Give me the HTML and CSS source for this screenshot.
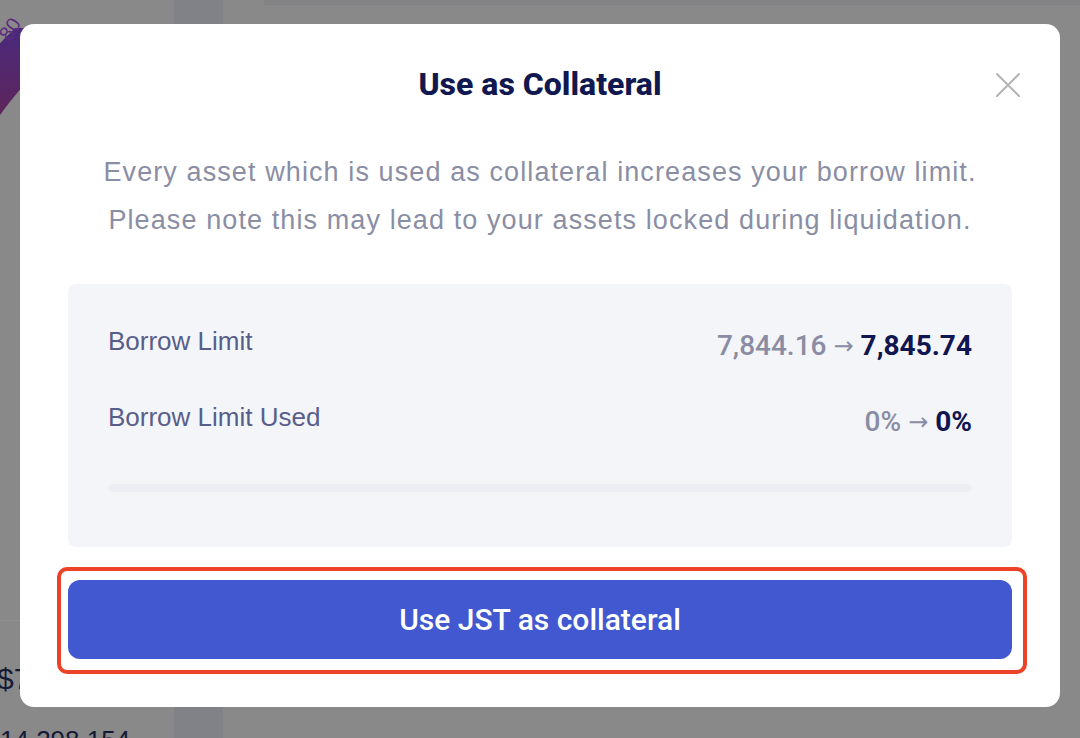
FILE: index.html
```html
<!DOCTYPE html>
<html lang="en">
<head>
<meta charset="utf-8">
<title>Use as Collateral</title>
<link rel="stylesheet" href="styles.css">
</head>
<body>
<div class="app">
  <aside class="side">
    <svg class="gauge" width="174" height="280" viewBox="0 0 174 280">
      <defs>
        <linearGradient id="g" gradientUnits="userSpaceOnUse" x1="0" y1="0" x2="0" y2="270">
          <stop offset="0" stop-color="#4a2a7c" stop-opacity="0"/>
          <stop offset="0.105" stop-color="#4a2a7c" stop-opacity="0"/>
          <stop offset="0.105" stop-color="#4a2a7c"/>
          <stop offset="0.45" stop-color="#5f2458"/>
          <stop offset="1" stop-color="#898989" stop-opacity="0"/>
        </linearGradient>
      </defs>
      <circle cx="300" cy="330" r="392" fill="none" stroke="url(#g)" stroke-width="46"/>
      <text x="9" y="42" class="gauge-label" transform="rotate(-55 9 42)">80</text>
    </svg>
    <div class="side-divider"></div>
    <div class="side-amount">$7</div>
    <div class="side-number">14,298,154</div>
  </aside>
  <div class="strip"></div>
  <main class="main">
    <div class="topbar"></div>
  </main>
</div>

<div class="overlay">
  <div class="modal">
    <h1 class="title">Use as Collateral</h1>
    <button class="close" aria-label="Close">
      <svg width="24" height="24" viewBox="0 0 24 24"><path d="M1 1 L23 23 M23 1 L1 23" stroke="#b4b4b4" stroke-width="2" stroke-linecap="round"/></svg>
    </button>
    <p class="desc">Every asset which is used as collateral increases your borrow limit.<br>Please note this may lead to your assets locked during liquidation.</p>
    <div class="stats">
      <div class="row">
        <span class="label">Borrow Limit</span>
        <span class="value"><span class="old">7,844.16</span><span class="arrow">→</span><span class="new">7,845.74</span></span>
      </div>
      <div class="row row2">
        <span class="label">Borrow Limit Used</span>
        <span class="value"><span class="old">0%</span><span class="arrow">→</span><span class="new">0%</span></span>
      </div>
      <div class="bar"></div>
    </div>
    <div class="action">
      <button class="primary">Use JST as collateral</button>
      <div class="highlight"></div>
    </div>
  </div>
</div>
</body>
</html>
```
FILE: styles.css
```css
* { box-sizing: border-box; }
html, body { margin: 0; padding: 0; }
body {
  width: 1080px;
  height: 738px;
  overflow: hidden;
  background: #898989;
  font-family: "Liberation Sans", Arial, sans-serif;
  position: relative;
}
.app {
  display: flex;
  height: 738px;
}
.side {
  width: 174px;
  flex: none;
  display: flex;
  flex-direction: column;
  overflow: hidden;
}
.gauge { display: block; flex: none; }
.gauge-label {
  font-family: "Liberation Sans", sans-serif;
  font-size: 20px;
  fill: #5e2a80;
}
.side-divider {
  flex: none;
  margin-top: 340px;
  height: 1px;
  background: #919191;
}
.side-amount {
  margin-top: 42px;
  margin-left: -3px;
  font-size: 30px;
  line-height: 32px;
  color: #151a35;
  white-space: nowrap;
}
.side-number {
  margin-top: 30px;
  font-size: 26px;
  line-height: 30px;
  color: #151a35;
  white-space: nowrap;
}
.strip {
  width: 49px;
  flex: none;
  background: #818287;
}
.main {
  flex: 1;
  padding-left: 41px;
}
.topbar {
  height: 5px;
  background: #848486;
  border-bottom: 1px solid #808083;
}

.overlay {
  position: fixed;
  inset: 0;
  padding: 24px 20px 31px;
  display: flex;
}
.modal {
  flex: 1;
  position: relative;
  background: #fff;
  border-radius: 14px;
  padding: 40px 48px 0;
}
.title {
  margin: 0;
  font-family: Roboto, "Liberation Sans", sans-serif;
  font-weight: 800;
  font-size: 32px;
  line-height: 40px;
  color: #111850;
  text-align: center;
}
.close {
  position: absolute;
  top: 49px;
  right: 40px;
  width: 24px;
  height: 24px;
  padding: 0;
  border: 0;
  background: none;
}
.close svg { display: block; }
.desc {
  margin: 44px 0 0;
  font-size: 27px;
  letter-spacing: 1.1px;
  line-height: 48px;
  color: #8a8ea4;
  text-align: center;
}
.stats {
  margin-top: 40px;
  height: 263px;
  background: #f4f5f9;
  border-radius: 8px;
  padding: 39px 40px 0;
}
.row {
  display: flex;
  justify-content: space-between;
  align-items: flex-start;
}
.row2 { margin-top: 35px; }
.label {
  font-size: 26px;
  line-height: 36px;
  color: #585e8a;
}
.value {
  padding-top: 5px;
  line-height: 36px;
  font-family: Roboto, "Liberation Sans", sans-serif;
  font-size: 28px;
  display: flex;
  align-items: center;
  white-space: nowrap;
}
.old { color: #8a8ca3; font-weight: 500; }
.new { color: #101650; font-weight: 700; }
.arrow {
  font-family: "DejaVu Sans", sans-serif;
  font-size: 24px;
  color: #8a8ca3;
  margin: 0 7px;
}
.bar {
  margin-top: 44px;
  height: 8px;
  border-radius: 4px;
  background: #edeef3;
}
.action {
  position: relative;
  margin-top: 33px;
}
.primary {
  display: block;
  width: 100%;
  height: 79px;
  border: 0;
  border-radius: 12px;
  background: #4158d0;
  color: #fff;
  font-family: Roboto, "Liberation Sans", sans-serif;
  font-weight: 500;
  font-size: 30px;
}
.highlight {
  position: absolute;
  top: -13px;
  left: -11px;
  right: -15px;
  bottom: -15px;
  border: 4px solid #ec4227;
  border-radius: 10px;
  pointer-events: none;
}
```
